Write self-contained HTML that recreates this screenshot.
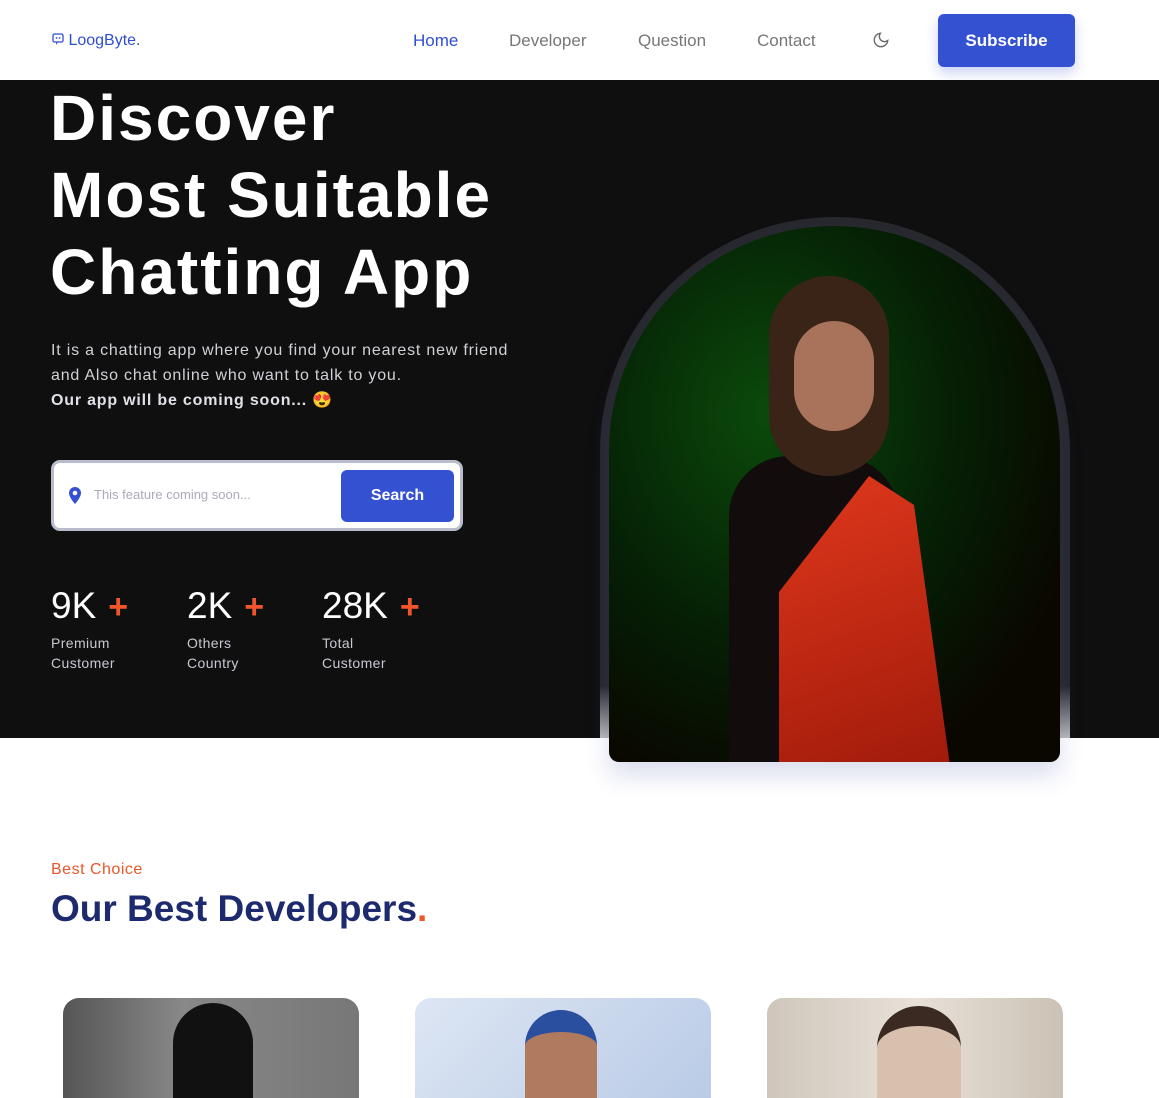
<!DOCTYPE html>
<html><head><meta charset="utf-8"><style>
*{margin:0;padding:0;box-sizing:border-box}
body{width:1159px;height:1080px;overflow:hidden;background:#fff;font-family:"Liberation Sans",sans-serif;position:relative}
.nav{position:absolute;top:0;left:0;width:1159px;height:80px;background:#fff}
.logo{position:absolute;left:52px;top:32px;color:#2f4fcf;font-size:16px}
.nav a{position:absolute;top:31px;font-size:17px;color:#777;text-decoration:none}
.sub{position:absolute;left:938px;top:14px;width:137px;height:53px;background:#3451d1;border-radius:6px;color:#fff;font-weight:bold;font-size:17px;text-align:center;line-height:53px;box-shadow:0 6px 12px rgba(52,81,209,.25)}
.hero{position:absolute;top:80px;left:0;width:1159px;height:658px;background:#0f0f10}
h1{position:absolute;left:50px;top:0;color:#fff;font-size:64px;line-height:77px;font-weight:bold;letter-spacing:2px}
.p{position:absolute;left:51px;top:258px;color:#d0d0d6;font-size:16px;line-height:25px;letter-spacing:.8px}
.search{position:absolute;left:51px;top:380px;width:412px;height:71px;background:#fff;border:3px solid #b8bccb;border-radius:9px}
.search .ph{position:absolute;left:40px;top:24px;color:#aab;font-size:13px}
.search .btn{position:absolute;left:287px;top:7px;width:113px;height:52px;background:#3451d1;border-radius:6px;color:#fff;font-weight:bold;font-size:16px;text-align:center;line-height:52px}
.stat{position:absolute;top:505px;color:#fff}
.stat b{font-size:37px;font-weight:normal}
.stat i{color:#f0562a;font-style:normal;font-size:34px;margin-left:12px;font-weight:bold}
.stat div{color:#c8c8d0;font-size:14px;line-height:20px;margin-top:6px;letter-spacing:.4px}
.arch{position:absolute;left:600px;top:217px;width:470px;height:521px;border-radius:235px 235px 0 0;background:linear-gradient(#28282e 90%,#bbb)}
.img{position:absolute;left:609px;top:226px;width:451px;height:536px;border-radius:225px 225px 10px 10px;overflow:hidden;background:radial-gradient(ellipse at 35% 35%,#0b4a0b,#052005 45%,#0a0600 80%);box-shadow:0 14px 24px rgba(60,80,160,.18)}
.bc{position:absolute;left:51px;top:861px;color:#e8562a;font-size:16px;letter-spacing:.5px}
h2{position:absolute;left:51px;top:888px;color:#1d2b6e;font-size:37px;font-weight:bold}
h2 span{color:#f0562a}
.card{position:absolute;top:998px;width:296px;height:100px;border-radius:16px 16px 0 0;overflow:hidden}
</style></head><body>
<div class="nav">
<div class="logo"><svg width="12" height="13" viewBox="0 0 12 13" style="vertical-align:-1px"><rect x="1" y="1" width="10" height="8" rx="1.5" fill="none" stroke="#2f4fcf" stroke-width="1.3"/><path d="M4 9v3l2-3" fill="#2f4fcf"/><circle cx="4.5" cy="5" r=".9" fill="#2f4fcf"/><circle cx="7.5" cy="5" r=".9" fill="#2f4fcf"/></svg> LoogByte.</div>
<a style="left:413px;color:#2f4fcf">Home</a>
<a style="left:509px">Developer</a>
<a style="left:638px">Question</a>
<a style="left:757px">Contact</a>
<svg style="position:absolute;left:872px;top:31px" width="18" height="18" viewBox="0 0 24 24"><path d="M21 12.8A9 9 0 1 1 11.2 3a7 7 0 0 0 9.8 9.8z" fill="none" stroke="#666" stroke-width="1.8"/></svg>
<div class="sub">Subscribe</div>
</div>
<div class="hero">
<h1>Discover<br>Most Suitable<br>Chatting App</h1>
<div class="p">It is a chatting app where you find your nearest new friend<br>and Also chat online who want to talk to you.<br><b style="color:#e0e0e6">Our app will be coming soon...</b> 😍</div>
<div class="search"><svg style="position:absolute;left:14px;top:24px" width="14" height="17" viewBox="0 0 14 17"><path d="M7 0a6 6 0 0 0-6 6c0 4.5 6 11 6 11s6-6.5 6-11a6 6 0 0 0-6-6z" fill="#3451d1"/><circle cx="7" cy="6" r="2.3" fill="#fff"/></svg><div class="ph">This feature coming soon...</div><div class="btn">Search</div></div>
<div class="stat" style="left:51px"><b>9K</b><i>+</i><div>Premium<br>Customer</div></div>
<div class="stat" style="left:187px"><b>2K</b><i>+</i><div>Others<br>Country</div></div>
<div class="stat" style="left:322px"><b>28K</b><i>+</i><div>Total<br>Customer</div></div>
</div>
<div class="arch"></div>
<div class="img">
<div style="position:absolute;left:120px;top:230px;width:170px;height:320px;background:#120c0c;border-radius:60px 60px 0 0"></div>
<div style="position:absolute;left:160px;top:50px;width:120px;height:200px;background:#3a2418;border-radius:60px"></div>
<div style="position:absolute;left:185px;top:95px;width:80px;height:110px;background:#a8735a;border-radius:40px"></div>
<div style="position:absolute;left:170px;top:250px;width:180px;height:290px;background:linear-gradient(160deg,#e0381c,#a01a0a);clip-path:polygon(50% 0,75% 10%,95% 100%,0 100%,0 40%)"></div>
</div>
<div class="bc">Best Choice</div>
<h2>Our Best Developers<span>.</span></h2>
<div class="card" style="left:63px;background:linear-gradient(90deg,#555 0,#888 40%,#777 100%)"><div style="position:absolute;left:110px;top:5px;width:80px;height:100px;background:#111;border-radius:40px 40px 0 0"></div></div>
<div class="card" style="left:415px;background:linear-gradient(135deg,#dde6f4,#b9cbe6)"><div style="position:absolute;left:110px;top:12px;width:72px;height:100px;background:#b07a5e;border-radius:36px 36px 0 0;border-top:22px solid #2a4f9e"></div></div>
<div class="card" style="left:767px;background:linear-gradient(90deg,#cfc6bb,#e8e1d8,#cbc2b5)"><div style="position:absolute;left:110px;top:8px;width:84px;height:100px;background:#d8c0ae;border-radius:42px 42px 0 0;border-top:20px solid #3a2a22"></div></div>
</body></html>
